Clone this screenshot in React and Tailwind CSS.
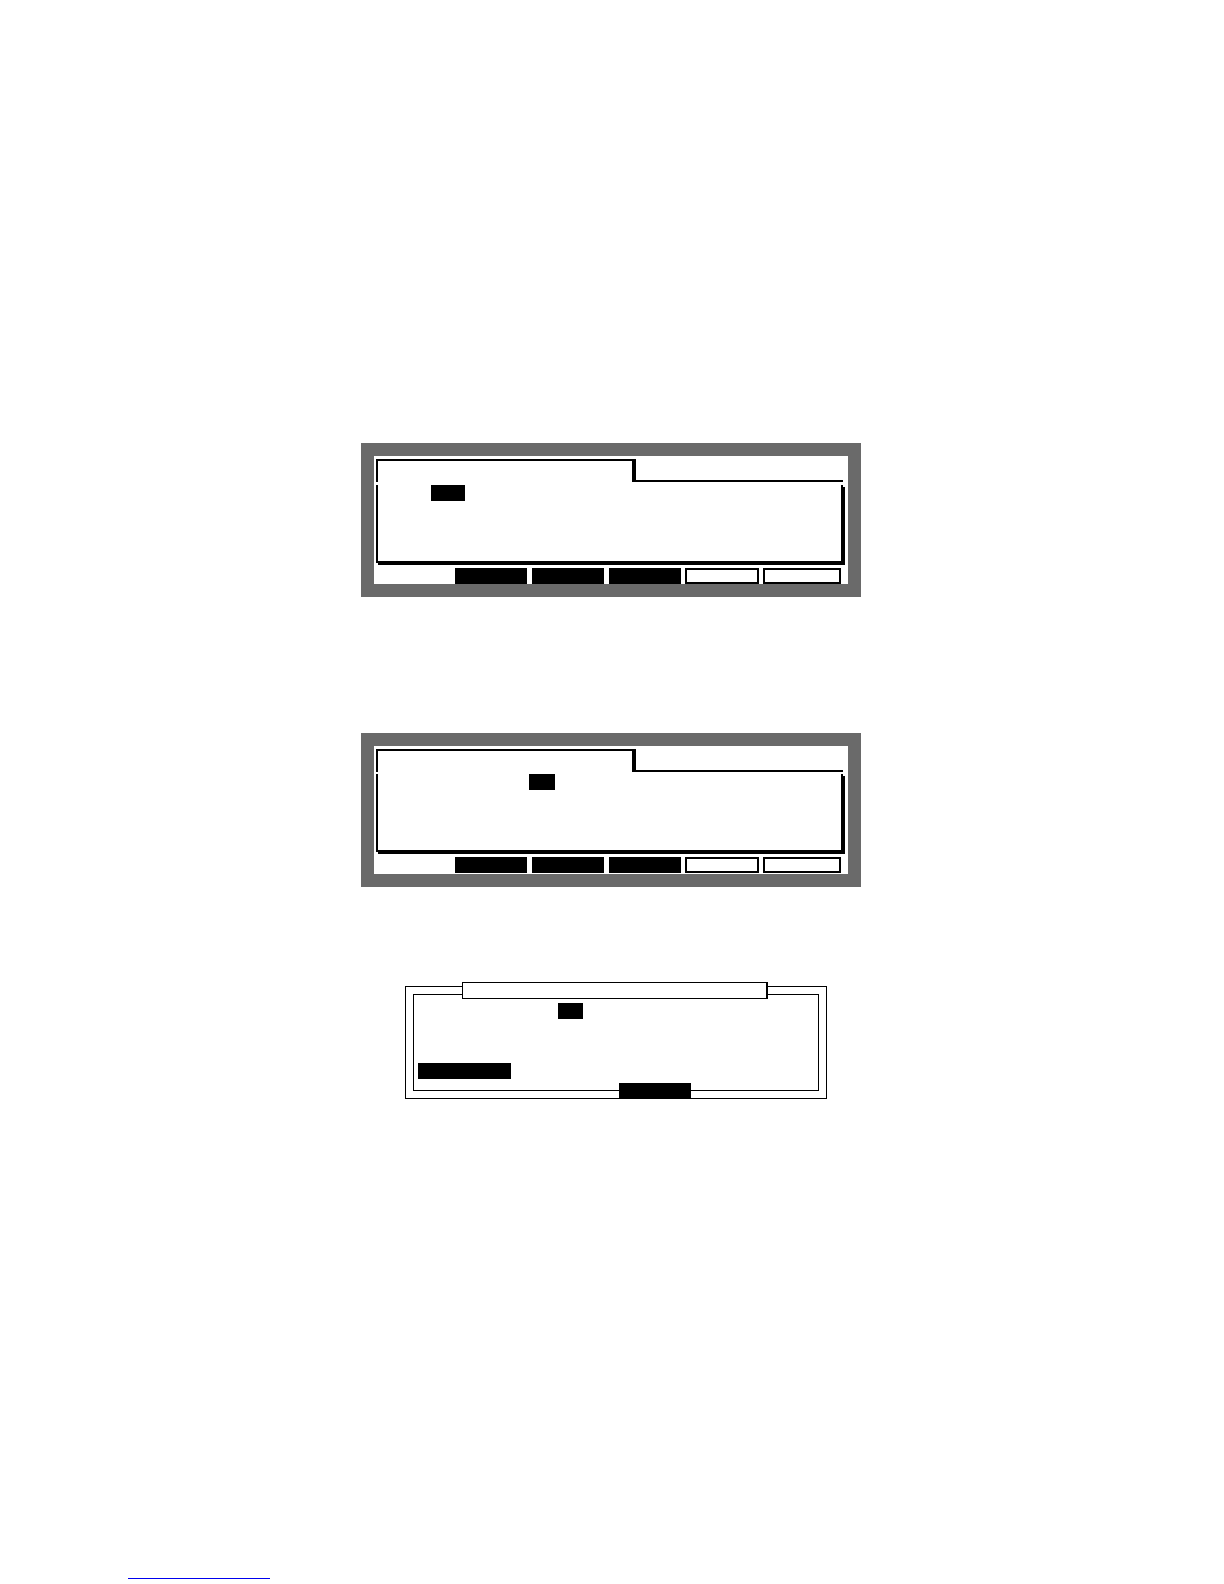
const Screen = ({ cursorLeft, cursorWidth, cursorTop }) => {
  return (
    <div className="w-[500px] h-[154px] bg-[#6a6a6a] p-[13px]">
      <div className="h-[128px] bg-white pl-[2px] pr-[5px] pt-[3px]">
        {/* tab header */}
        <div className="flex h-[23px]">
          <div className="w-[260px] border-l-2 border-t-2 border-r-[4px] border-black" />
          <div className="flex-1 border-b-2 border-black" />
        </div>
        {/* panel body */}
        <div className="h-[78px] border-l-2 border-r-2 border-b-2 border-black shadow-[2px_2px_0_#000]">
          <div className={`h-4 bg-black ${cursorLeft} ${cursorWidth} ${cursorTop}`} />
        </div>
        {/* soft keys */}
        <div className="flex mt-[5px] ml-[79px] h-4">
          <div className="w-[72px] bg-black" />
          <div className="w-[72px] bg-black ml-[5px]" />
          <div className="w-[72px] bg-black ml-[5px]" />
          <div className="w-[74px] border-2 border-black ml-[4px]" />
          <div className="w-[78px] border-2 border-black ml-[4px]" />
        </div>
      </div>
    </div>
  );
};

export default function App() {
  return (
    <div className="min-h-[1584px] bg-white relative pt-[443px]">
      <div className="ml-[361px]">
        <Screen cursorLeft="ml-[53px]" cursorWidth="w-[34px]" cursorTop="mt-[3px]" />
      </div>

      <div className="ml-[361px] mt-[136px]">
        <Screen cursorLeft="ml-[151px]" cursorWidth="w-[26px]" cursorTop="mt-[2px]" />
      </div>

      {/* dialog */}
      <div className="ml-[405px] mt-[99px] w-[422px] relative border border-black p-[7px]">
        <div className="h-[97px] border border-black flex flex-col">
          <div className="ml-[144px] mt-[8px] w-[25px] h-4 bg-black" />
          <div className="ml-[4px] mt-[44px] w-[93px] h-4 bg-black" />
        </div>
        <div className="absolute left-[56px] top-[-5px] w-[306px] h-[17px] bg-white border border-black border-r-2" />
        <div className="absolute left-[213px] top-[96px] w-[72px] h-[16px] bg-black" />
      </div>

      <div className="absolute left-[128px] top-[1578px] w-[142px] h-px bg-[#0000ee]" />
    </div>
  );
}
